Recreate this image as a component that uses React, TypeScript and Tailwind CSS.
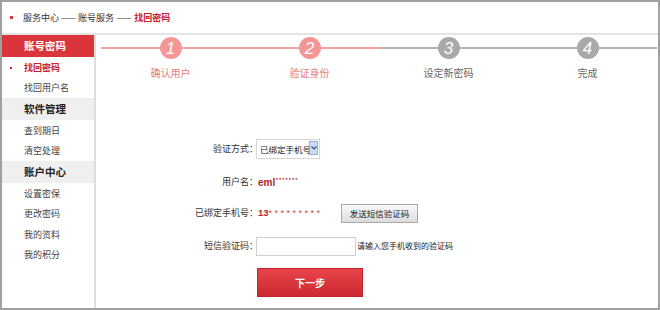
import React from "react";

const font = { fontFamily: '"Noto Sans CJK SC", "Noto Sans", sans-serif' };

function SideHeader({ text, red }: { text: string; red?: boolean }) {
  return (
    <div
      className={
        "h-[22px] flex items-center pl-[22px] text-[10.5px] font-bold " +
        (red ? "bg-[#d9353b] text-white" : "bg-[#efefef] text-[#222]")
      }
    >
      {text}
    </div>
  );
}

function SideItem({ text, active }: { text: string; active?: boolean }) {
  return (
    <div
      className={
        "h-[20.5px] flex items-center pl-[22px] text-[9px] relative " +
        (active ? "text-[#c8202a] font-bold" : "text-[#444]")
      }
    >
      {active && <span className="absolute left-[8px] top-[10px] w-[2px] h-[2px] bg-[#c8202a]" />}
      {text}
    </div>
  );
}

function Step({ n, label, on }: { n: number; label: string; on: boolean }) {
  return (
    <div className="flex flex-col items-center relative">
      <div className={"absolute left-0 right-0 top-[10px] h-[2px] " + (on ? "bg-[#f4a3a3]" : "bg-[#b3b3b3]")} />
      <div
        className={
          "relative w-[22px] h-[22px] rounded-full flex items-center justify-center text-white italic text-[17px] leading-none " +
          (on ? "bg-[#f59696]" : "bg-[#a9a9a9]")
        }
        style={{ fontFamily: '"Liberation Sans", Arial, sans-serif' }}
      >
        {n}
      </div>
      <div className={"mt-[7px] text-[10px] leading-[14px] " + (on ? "text-[#e77d7d]" : "text-[#666]")}>{label}</div>
    </div>
  );
}

function Row({ label, children, h, mt }: { label: string; children: React.ReactNode; h: string; mt: string }) {
  return (
    <div className={"flex items-center " + h + " " + mt}>
      <div className="w-[163px] text-right text-[9px] text-[#333] -mr-[3px] pr-[1px]">{label}</div>
      <div className="flex items-center">{children}</div>
    </div>
  );
}

export default function App() {
  return (
    <div className="w-[660px] h-[310px] bg-white border-2 border-[#a0a0a0] flex flex-col overflow-hidden" style={font}>
      <div className="h-[31px] flex items-center pl-[8px] shrink-0">
        <span className="w-[3px] h-[3px] bg-[#d9353b] mr-[10px]" />
        <span className="text-[9px] text-[#333]">服务中心 —— 账号服务 —— </span>
        <span className="text-[9px] text-[#c8202a] font-bold ml-[3px]">找回密码</span>
      </div>
      <div className="h-[2px] bg-[#e4e4e4] shrink-0" />
      <div className="flex flex-1">
        <div className="w-[94px] border-r-2 border-[#dedede] shrink-0">
          <SideHeader text="账号密码" red />
          <SideItem text="找回密码" active />
          <SideItem text="找回用户名" />
          <SideHeader text="软件管理" />
          <SideItem text="查到期日" />
          <SideItem text="清空处理" />
          <SideHeader text="账户中心" />
          <SideItem text="设置密保" />
          <SideItem text="更改密码" />
          <SideItem text="我的资料" />
          <SideItem text="我的积分" />
        </div>
        <div className="flex-1 flex flex-col">
          <div className="grid grid-cols-[139px_139px_139px_139px] pl-[5px] pt-[2px]">
            <Step n={1} label="确认用户" on />
            <Step n={2} label="验证身份" on />
            <Step n={3} label="设定新密码" on={false} />
            <Step n={4} label="完成" on={false} />
          </div>
          <Row label="验证方式：" h="h-[20px]" mt="mt-[59px]">
            <div className="w-[64px] h-[20px] border border-[#d6d6d6] relative flex items-end pb-[2px] pl-[3px] text-[8.5px] text-[#222]">
              已绑定手机号
              <div className="absolute right-[1px] top-[1px] w-[9px] h-[14px] bg-[#c9dcf5] border border-[#8fb0dc] flex items-center justify-center">
                <svg width="6" height="4" viewBox="0 0 6 4">
                  <path d="M0.5 0.5 L3 3 L5.5 0.5" stroke="#2d4f8a" strokeWidth="1.2" fill="none" />
                </svg>
              </div>
            </div>
          </Row>
          <Row label="用户名：" h="h-[20px]" mt="mt-[13px]">
            <span className="text-[10px] font-bold text-[#b3262d] ml-[2px]" style={{ fontFamily: '"Liberation Sans", Arial, sans-serif' }}>
              eml
            </span>
            <span className="text-[7px] text-[#b3262d] -mt-[4px]">*******</span>
          </Row>
          <Row label="已绑定手机号：" h="h-[20px]" mt="mt-[11px]">
            <span
              className="w-[85px] text-[9.5px] font-bold text-[#b3262d] whitespace-nowrap pl-[2px]"
              style={{ fontFamily: '"Liberation Sans", Arial, sans-serif' }}
            >
              13<span className="font-normal text-[9px] text-[#c8464b]">* * * * * * * * *</span>
            </span>
            <button className="w-[77px] h-[19px] border border-[#a8a8a8] bg-gradient-to-b from-[#fafafa] to-[#dcdcdc] text-[8.5px] text-[#222]">
              发送短信验证码
            </button>
          </Row>
          <Row label="短信验证码：" h="h-[20px]" mt="mt-[13px]">
            <div className="w-[100px] h-[19px] border border-[#cfcfcf] bg-white" />
            <span className="text-[8px] text-[#222] ml-[1px]">请输入您手机收到的验证码</span>
          </Row>
          <div className="pl-[161px] mt-[12px]">
            <button className="w-[106px] h-[29px] bg-gradient-to-b from-[#e8434a] to-[#cc2a30] border border-[#c0242a] text-white text-[10px] font-bold">
              下一步
            </button>
          </div>
        </div>
      </div>
    </div>
  );
}
